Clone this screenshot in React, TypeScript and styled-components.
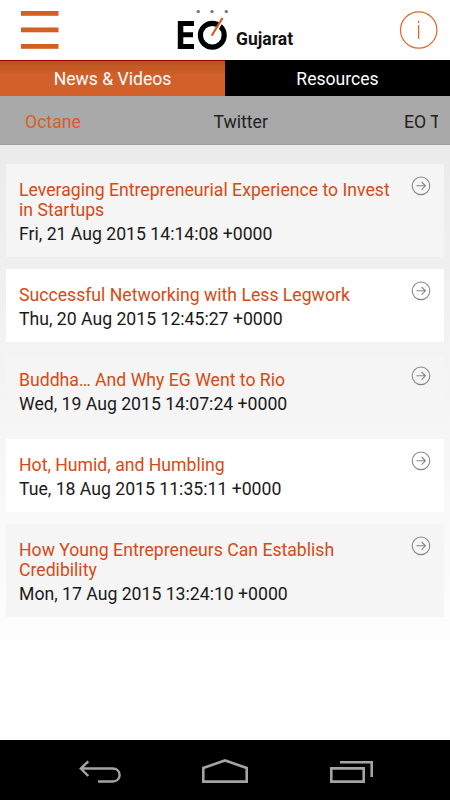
import React from 'react';
import styled, { createGlobalStyle } from 'styled-components';

const GlobalStyle = createGlobalStyle`
  * { box-sizing: border-box; }
  body { margin: 0; font-family: Roboto, "Liberation Sans", sans-serif; background: #fff; }
`;

const Screen = styled.div`
  width: 450px;
  height: 800px;
  display: flex;
  flex-direction: column;
  overflow: hidden;
`;

const Header = styled.header`
  height: 60px;
  flex: none;
  display: grid;
  grid-template-columns: 60px 1fr 60px;
  background: #fff;
`;

const IconButton = styled.button`
  border: 0;
  padding: 0;
  background: none;
  height: 60px;
  svg { display: block; }
`;

const Brand = styled.div`
  display: flex;
  padding-left: 112px;
  svg { flex: none; display: block; }
`;

const Chapter = styled.span`
  font-size: 17.5px;
  font-weight: 700;
  line-height: 20px;
  padding: 29px 0 0 4px;
  color: #111;
`;

const Tabs = styled.nav`
  height: 36px;
  flex: none;
  display: grid;
  grid-template-columns: 1fr 1fr;
`;

const Tab = styled.button<{ $active?: boolean }>`
  border: 0;
  border-top: 1px solid ${(p) => (p.$active ? '#a80000' : '#000')};
  border-bottom: 1px solid ${(p) => (p.$active ? '#c8560f' : '#000')};
  padding: 1px 0 0;
  background: ${(p) => (p.$active ? 'linear-gradient(#b9541f, #d2602a 40%)' : '#000')};
  color: #fff;
  font: 400 17.6px/34px Roboto, sans-serif;
`;

const Feeds = styled.nav`
  height: 49px;
  flex: none;
  display: grid;
  grid-template-columns: 188.5px 190.5px 34px;
  margin: 0;
  padding: 0 12px 0 25px;
  background: #a9a9a9;
  border-bottom: 1px solid #9f9f9f;
  overflow: hidden;
`;

const Feed = styled.span<{ $active?: boolean }>`
  overflow: hidden;
  white-space: nowrap;
  font-size: 17.65px;
  font-weight: 400;
  line-height: 52px;
  color: ${(p) => (p.$active ? '#d95f1e' : '#222')};
`;

const List = styled.main`
  flex: 1;
  display: flex;
  flex-direction: column;
  gap: 12px;
  padding: 19px 6px 0;
  background: linear-gradient(#ebebeb, #fff 90%);
`;

const Card = styled.article<{ $shaded: boolean }>`
  display: flex;
  justify-content: space-between;
  padding: 16px 13px 11px;
  background: ${(p) => (p.$shaded ? '#f5f5f5' : '#fff')};
  svg { flex: none; display: block; margin-top: -4px; }
`;

const Title = styled.h2`
  margin: 0;
  font-size: 17.65px;
  font-weight: 400;
  line-height: 20px;
  color: #d64a14;
  white-space: pre-line;
`;

const DateLine = styled.p`
  margin: 2px 0 0;
  font-size: 17.65px;
  font-weight: 400;
  line-height: 24px;
  color: #1a1a1a;
`;

const SystemBar = styled.footer`
  height: 60px;
  flex: none;
  display: flex;
  justify-content: center;
  background: #000;
`;

const SystemButton = styled.button`
  width: 126px;
  border: 0;
  padding: 0;
  background: none;
  svg { display: block; }
`;

const articles = [
  { title: 'Leveraging Entrepreneurial Experience to Invest\nin Startups', date: 'Fri, 21 Aug 2015 14:14:08 +0000' },
  { title: 'Successful Networking with Less Legwork', date: 'Thu, 20 Aug 2015 12:45:27 +0000' },
  { title: 'Buddha… And Why EG Went to Rio', date: 'Wed, 19 Aug 2015 14:07:24 +0000' },
  { title: 'Hot, Humid, and Humbling', date: 'Tue, 18 Aug 2015 11:35:11 +0000' },
  { title: 'How Young Entrepreneurs Can Establish\nCredibility', date: 'Mon, 17 Aug 2015 13:24:10 +0000' },
];

const MenuIcon = () => (
  <svg width="60" height="60" fill="#d45f20">
    <rect x="21" y="11" width="37.5" height="4.8" />
    <rect x="21" y="27.5" width="37.5" height="4.8" />
    <rect x="21" y="44" width="37.5" height="4.8" />
  </svg>
);

const Logo = () => (
  <svg width="60" height="60" viewBox="172 0 60 60" fill="none">
    <g fill="#777">
      <circle cx="198.2" cy="11.6" r="1.7" />
      <circle cx="212" cy="11.6" r="1.7" />
      <circle cx="226.3" cy="11.6" r="1.7" />
    </g>
    <path d="M177.8 21H194V26H183.3V32.3H193V37.2H183.3V44H194V49H177.8Z" fill="#000" />
    <circle cx="212.3" cy="35.2" r="11.9" stroke="#000" strokeWidth="5.2" />
    <path d="M213 35.5L223.8 18" stroke="#fff" strokeWidth="3" />
    <path d="M211.6 35.8L222.6 18" stroke="#d9541c" strokeWidth="2.1" />
  </svg>
);

const InfoIcon = () => (
  <svg width="60" height="60" viewBox="390 0 60 60" fill="none" stroke="#dc6424">
    <circle cx="418.7" cy="30" r="18.2" strokeWidth="1.2" />
    <path d="M418.6 25V39M418.6 20.8V23" strokeWidth="1.3" />
  </svg>
);

const ArrowIcon = () => (
  <svg width="20" height="20" fill="none" stroke="#858585" strokeWidth="1.1">
    <circle cx="10" cy="9.8" r="8.8" />
    <path d="M5.5 9.8H14.3M10.6 6L14.4 9.8L10.6 13.6" />
  </svg>
);

const BackIcon = () => (
  <svg width="126" height="60" viewBox="36 740 126 60" fill="none" stroke="#a4a4a4" strokeWidth="2.4">
    <path d="M81 768.5H112.5C122 768.5 122 781.5 112.5 781.5H98M88.3 761.3L80.8 768.5L88.3 776" />
  </svg>
);

const HomeIcon = () => (
  <svg width="126" height="60" viewBox="162 740 126 60" fill="none" stroke="#a4a4a4" strokeWidth="2.6">
    <path d="M203.3 781.6V768L225 760.4L246.7 768V781.6Z" />
  </svg>
);

const RecentsIcon = () => (
  <svg width="126" height="60" viewBox="288 740 126 60" fill="none" stroke="#a4a4a4" strokeWidth="2.6">
    <path d="M331.3 768.4H363.7V781.6H331.3ZM340 762.3H371.7V777" />
  </svg>
);

export default function App() {
  return (
    <Screen>
      <GlobalStyle />
      <Header>
        <IconButton aria-label="Menu"><MenuIcon /></IconButton>
        <Brand><Logo /><Chapter>Gujarat</Chapter></Brand>
        <IconButton aria-label="Information"><InfoIcon /></IconButton>
      </Header>
      <Tabs>
        <Tab $active>News &amp; Videos</Tab>
        <Tab>Resources</Tab>
      </Tabs>
      <Feeds>
        <Feed $active>Octane</Feed>
        <Feed>Twitter</Feed>
        <Feed>EO T</Feed>
      </Feeds>
      <List>
        {articles.map((article, index) => (
          <Card key={article.title} $shaded={index % 2 === 0}>
            <div>
              <Title>{article.title}</Title>
              <DateLine>{article.date}</DateLine>
            </div>
            <ArrowIcon />
          </Card>
        ))}
      </List>
      <SystemBar>
        <SystemButton aria-label="Back"><BackIcon /></SystemButton>
        <SystemButton aria-label="Home"><HomeIcon /></SystemButton>
        <SystemButton aria-label="Recent apps"><RecentsIcon /></SystemButton>
      </SystemBar>
    </Screen>
  );
}
